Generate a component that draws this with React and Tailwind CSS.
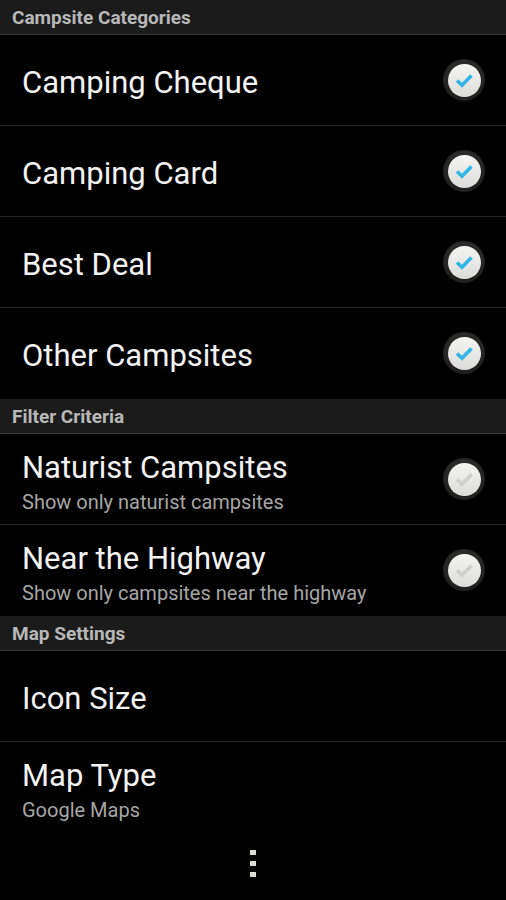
const font = { fontFamily: "Roboto, 'Liberation Sans', sans-serif" };

const Check = ({ checked }) => (
  <div className="w-[42px] h-[42px] rounded-full bg-[radial-gradient(circle_at_50%_40%,#3a3a3a,#151515)] flex items-center justify-center shadow-[0_1px_2px_rgba(0,0,0,0.8)]">
    <div className="w-[33px] h-[33px] rounded-full bg-[linear-gradient(180deg,#f4f4f2,#dcdcda)] flex items-center justify-center">
      <svg width="22" height="22" viewBox="0 0 22 22">
        <path
          d="M4 11.5 L9 16.2 L18.5 6.5"
          fill="none"
          stroke={checked ? "#33b5e5" : "#cfcfcd"}
          strokeWidth="3.6"
          strokeLinecap="butt"
          strokeLinejoin="miter"
        />
      </svg>
    </div>
  </div>
);

const Header = ({ title }) => (
  <div className="h-[35px] bg-[#1b1b1b] border-b border-[#3a3a3a] flex items-center px-3 pt-[2px]">
    <span className="text-[19px] font-bold text-[#b8b8b8]">{title}</span>
  </div>
);

const Row = ({ title, summary, check, last }) => (
  <div
    className={`h-[91px] flex items-center pl-[22px] pr-[21px] border-b ${
      last ? "border-transparent" : "border-[#262626]"
    }`}
  >
    {summary ? (
      <div className="flex-1 flex flex-col self-start mt-[16px]">
        <span className="text-[31px] leading-[36px] text-[#f2f2f2]">{title}</span>
        <span className="mt-[2px] text-[20px] leading-[28px] text-[#a6a6a6]">{summary}</span>
      </div>
    ) : (
      <div className="flex-1 pt-[5px]">
        <span className="text-[31px] leading-[36px] text-[#f2f2f2]">{title}</span>
      </div>
    )}
    {check !== undefined && <Check checked={check} />}
  </div>
);

export default function App() {
  return (
    <div className="w-[506px] h-[900px] bg-black flex flex-col overflow-hidden" style={font}>
      <Header title="Campsite Categories" />
      <Row title="Camping Cheque" check={true} />
      <Row title="Camping Card" check={true} />
      <Row title="Best Deal" check={true} />
      <Row title="Other Campsites" check={true} last />
      <Header title="Filter Criteria" />
      <Row title="Naturist Campsites" summary="Show only naturist campsites" check={false} />
      <Row title="Near the Highway" summary="Show only campsites near the highway" check={false} last />
      <Header title="Map Settings" />
      <Row title="Icon Size" />
      <Row title="Map Type" summary="Google Maps" last />
      <div className="flex-1 flex justify-center pt-[17px]">
        <div className="flex flex-col gap-[6px]">
          <div className="w-[6px] h-[5px] bg-[#dcdcd6]" />
          <div className="w-[6px] h-[5px] bg-[#dcdcd6]" />
          <div className="w-[6px] h-[5px] bg-[#dcdcd6]" />
        </div>
      </div>
    </div>
  );
}
